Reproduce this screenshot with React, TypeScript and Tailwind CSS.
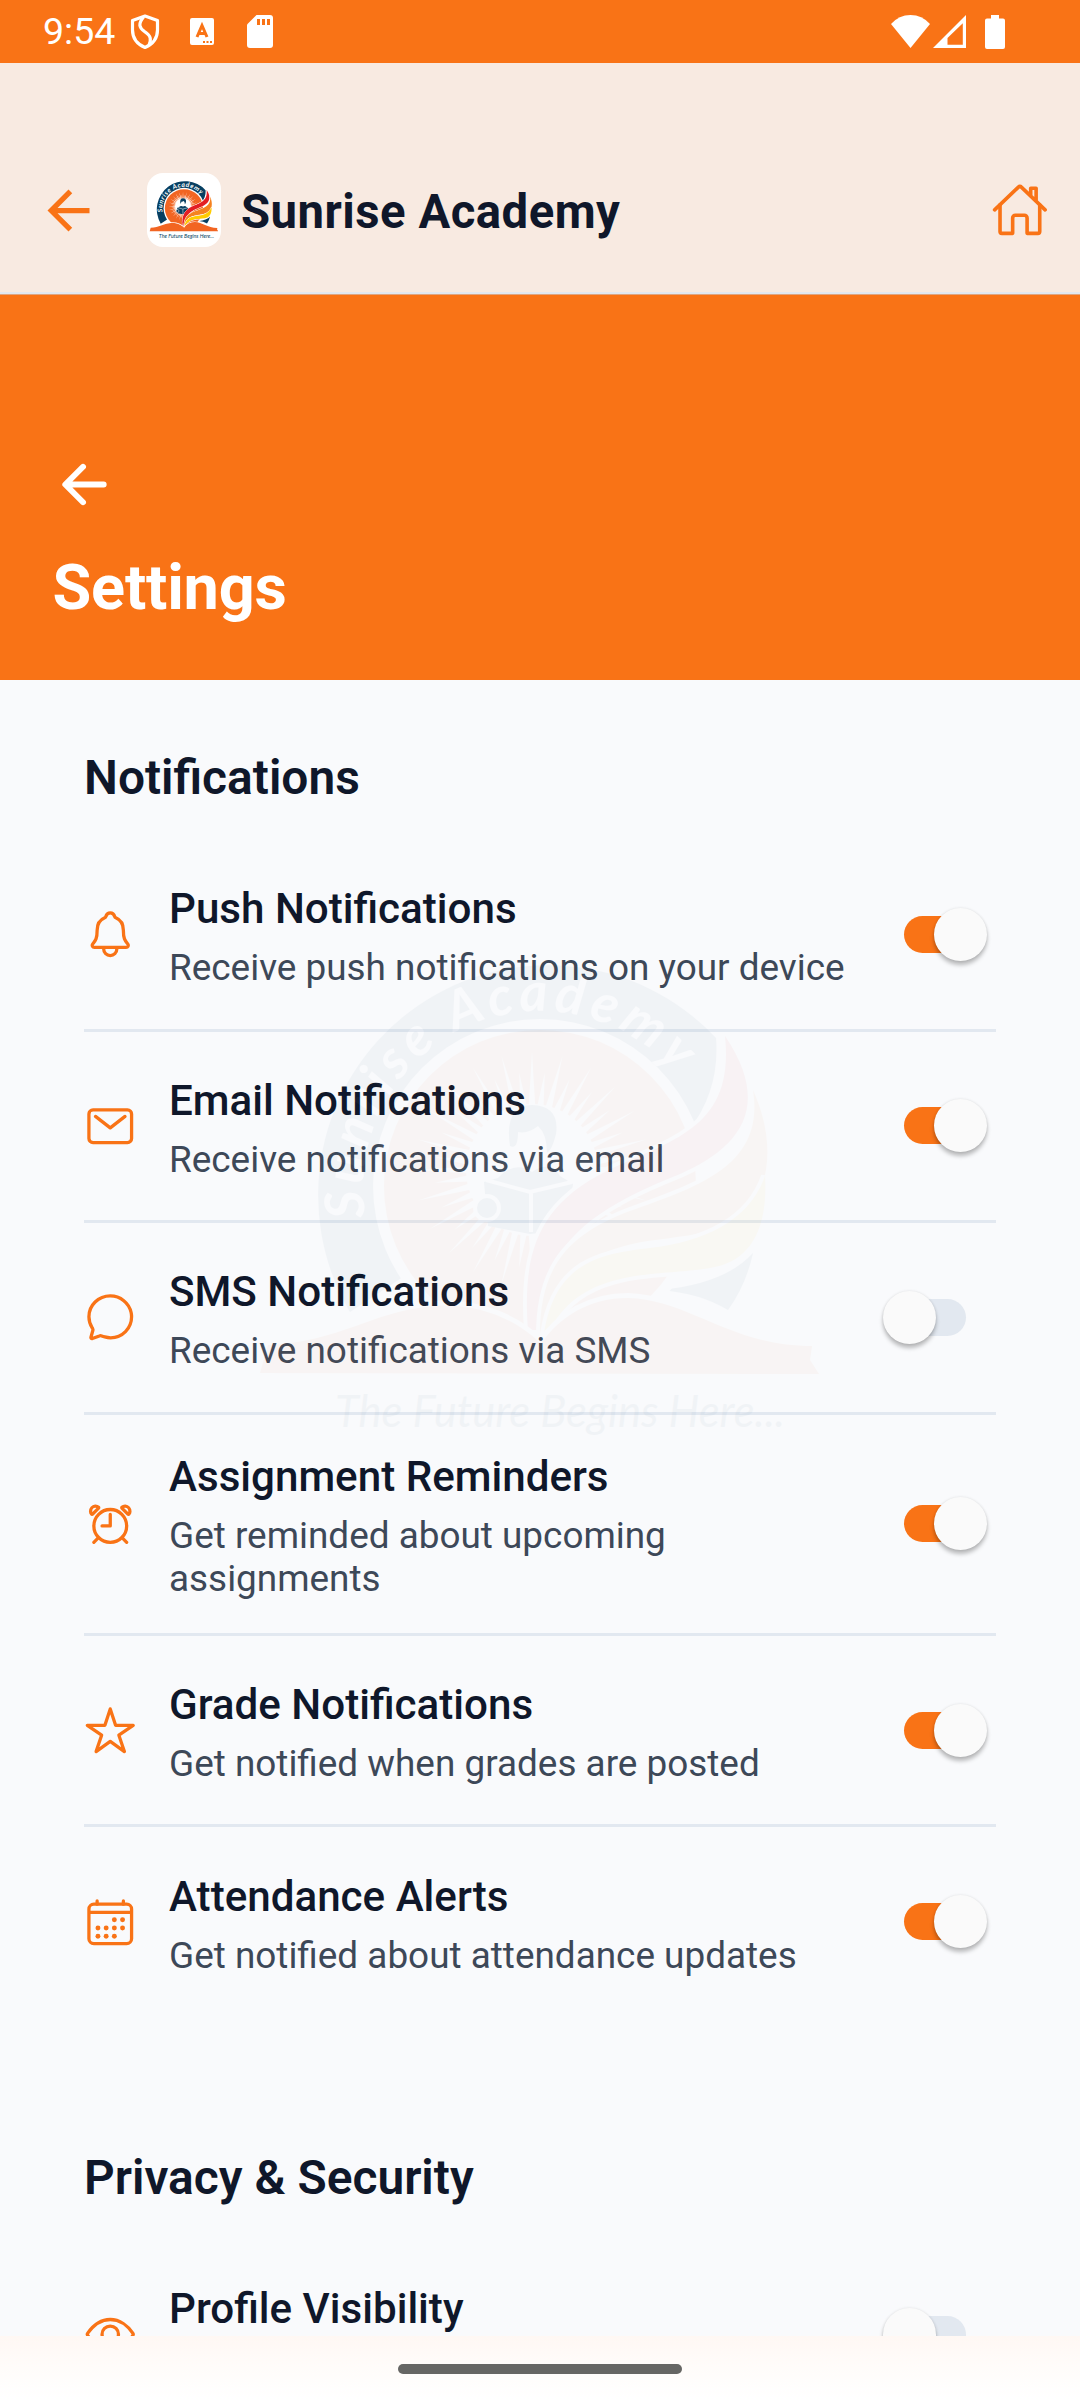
import React from "react";
import {
  IoAlarmOutline,
  IoArrowBackOutline,
  IoCalendarOutline,
  IoChatbubbleOutline,
  IoEyeOutline,
  IoHomeOutline,
  IoMailOutline,
  IoNotificationsOutline,
  IoStarOutline,
} from "react-icons/io5";
import { MdArrowBack } from "react-icons/md";
import type { IconType } from "react-icons";

const RAYS = Array.from({ length: 48 }, (_, i) => {
  const a = (i / 48) * Math.PI * 2;
  const w = 0.055;
  const outer = i % 2 ? 98 : 118;
  const p = (r: number, t: number) =>
    `${(532 + r * Math.cos(t)).toFixed(1)},${(1170 + r * Math.sin(t)).toFixed(1)}`;
  return `${p(62, a - w)} ${p(outer, a)} ${p(62, a + w)}`;
});

function AcademyLogo({ id, className }: { id: string; className: string }) {
  return (
    <svg viewBox="238 898 604 604" className={className}>
      <path id={id} d="M365.4 1217 A177 177 0 1 1 717 1186" fill="none" />
      <path d="M350 1312 A230 230 0 0 1 716 1038 Q720 1090 689 1130 L540 1186 Z" fill="#073f62" />
      <path d="M753 1253 Q746 1285 728 1310 Q700 1293 660 1290 Q725 1284 753 1253 Z" fill="#073f62" />
      <circle cx="540" cy="1186" r="167" fill="#fff" />
      <circle cx="540" cy="1186" r="156" fill="#f26522" />
      <circle cx="532" cy="1170" r="66" fill="#fff" />
      {RAYS.map((r) => (
        <polygon key={r} points={r} fill="#fff" />
      ))}
      <path
        d="M510 1146 Q504 1106 532 1105 Q560 1106 556 1134 Q552 1150 547 1153 Q547 1134 538 1126 Q528 1134 518 1132 Q518 1150 510 1146 Z"
        fill="#073f62"
      />
      <path d="M498 1178 Q515 1160 532 1172 Q550 1160 560 1176 L573 1184 L566 1230 L530 1234 L488 1226 L484 1182 Z" fill="#073f62" />
      <path d="M486 1180 L530 1192 L572 1182 M531 1192 V1232" fill="none" stroke="#fff" strokeWidth="4" />
      <circle cx="487" cy="1208" r="12" fill="#073f62" stroke="#fff" strokeWidth="4" />
      <path
        d="M725 1036 C775 1110 735 1150 680 1174 C600 1206 540 1240 537 1330 L528 1330 C522 1250 540 1205 605 1172 C670 1140 735 1130 725 1036 Z"
        fill="#e31e24"
        stroke="#fff"
        strokeWidth="8"
        paintOrder="stroke"
      />
      <path
        d="M753 1090 C780 1150 765 1200 740 1217 C700 1246 640 1230 590 1260 C560 1280 550 1310 544 1334 L540 1334 C540 1260 575 1232 630 1211 C700 1186 765 1165 753 1090 Z"
        fill="#f58220"
        stroke="#fff"
        strokeWidth="8"
        paintOrder="stroke"
      />
      <path
        d="M765 1176 C768 1230 750 1262 710 1268 C660 1277 580 1265 548 1334 L544 1334 C555 1262 600 1254 650 1248 C705 1242 750 1220 765 1176 Z"
        fill="#ffcc00"
        stroke="#fff"
        strokeWidth="8"
        paintOrder="stroke"
      />
      <path
        d="M260 1373 L268 1345 C340 1342 370 1312 433 1306 C480 1302 520 1322 541 1344 C560 1316 590 1298 628 1298 C690 1300 730 1346 812 1346 L810 1360 L819 1374 Z"
        fill="#f26522"
        stroke="#fff"
        strokeWidth="10"
        paintOrder="stroke"
      />
      <text fill="#fff" className="font-['Lato'] text-[54px] font-bold italic">
        <textPath href={`#${id}`} textLength="460" lengthAdjust="spacing">
          Sunrise Academy
        </textPath>
      </text>
      <text
        x="335"
        y="1427"
        textLength="450"
        lengthAdjust="spacingAndGlyphs"
        fill="#073f62"
        className="font-['Lato'] text-[44px] italic"
      >
        The Future Begins Here...
      </text>
    </svg>
  );
}

function StatusBar() {
  return (
    <div className="flex h-[63px] shrink-0 items-center bg-[#f97316] pl-[43px] text-white">
      <span className="w-[87px] text-[37.5px] leading-[63px]">9:54</span>
      <svg className="h-[36px] w-[30px]" viewBox="0 0 30 36" fill="none" stroke="currentColor" strokeWidth="3.2" strokeLinejoin="round">
        <path d="M15 2 L27.500 6.500 V16 C27.500 25 22 30.500 15 33.500 C8 30.500 2.500 25 2.500 16 V6.500 Z" />
        <path d="M13.500 3 C8 10 9 13.500 14.500 17.500 C21 22 21.500 25 19 31" />
      </svg>
      <svg className="ml-[30px] h-[27px] w-[24px]" viewBox="0 0 24 27">
        <rect width="24" height="27" rx="2" fill="currentColor" />
        <path d="M7 19 L12 7.500 L17 19 M8.500 15.500 H15.500" fill="none" stroke="#f97316" strokeWidth="3" />
        <path d="M13 24 h2 M16.500 24 h2 M20 24 h2" stroke="#f97316" strokeWidth="2" />
      </svg>
      <svg className="ml-[33px] h-[33px] w-[26px]" viewBox="0 0 26 33">
        <path d="M9.500 0 H23 a3 3 0 0 1 3 3 V30 a3 3 0 0 1 -3 3 H3 a3 3 0 0 1 -3 -3 V9.500 Z" fill="currentColor" />
        <path d="M11.500 4 v6 M16.500 4 v6 M21.500 4 v6" stroke="#f97316" strokeWidth="3" />
      </svg>
      <svg className="ml-auto h-[33px] w-[39px]" viewBox="0 0 39 33">
        <path d="M0 9 Q8 0 19.500 0 T39 9 L19.500 33 Z" fill="currentColor" />
      </svg>
      <svg className="ml-[3px] h-[33px] w-[33px]" viewBox="0 0 33 33">
        <path d="M33 0 V33 H0 Z M29.800 8.200 L14.500 23 V29.800 H29.800 Z" fill="currentColor" fillRule="evenodd" />
      </svg>
      <svg className="mr-[75px] ml-[19px] h-[34px] w-[20px]" viewBox="0 0 20 34">
        <path d="M6 0 H14 V3.500 H18 a2 2 0 0 1 2 2 V32 a2 2 0 0 1 -2 2 H2 a2 2 0 0 1 -2 -2 V5.500 a2 2 0 0 1 2 -2 H6 Z" fill="currentColor" />
      </svg>
    </div>
  );
}

function Switch({ on }: { on: boolean }) {
  return (
    <div
      role="switch"
      aria-checked={on}
      className={`relative mr-[30px] h-[37px] w-[62px] shrink-0 rounded-full ${on ? "bg-[#f97316]" : "bg-[#e2e8f0]"}`}
    >
      <div
        className={`absolute top-[-8px] size-[53px] rounded-full bg-[#fafafa] shadow-[0_4px_4px_rgba(0,0,0,0.26),0_0_3px_rgba(0,0,0,0.1)] ${on ? "left-[30px]" : "left-[-21px]"}`}
      />
    </div>
  );
}

type Setting = { icon: IconType; title: string; text: string; on: boolean };

function SettingRow({ icon: Icon, title, text, on, last }: Setting & { last?: boolean }) {
  return (
    <div
      className={`flex shrink-0 items-center py-[33.5px] ${last ? "min-h-[189px]" : "min-h-[191.6px] border-b-[3px] border-[#e2e8f0]"}`}
    >
      <Icon className="size-[52.5px] shrink-0 text-[#f97316]" />
      <div className="ml-[32.5px] min-w-0 flex-1 pt-1 pr-[56px]">
        <div className="text-[42.15px] leading-[50px] font-medium text-[#0f172a]">{title}</div>
        <div className="mt-[12px] -mb-px text-[36.9px] leading-[43px] text-[#3d4858]">{text}</div>
      </div>
      <Switch on={on} />
    </div>
  );
}

const NOTIFICATIONS: Setting[] = [
  { icon: IoNotificationsOutline, title: "Push Notifications", text: "Receive push notifications on your device", on: true },
  { icon: IoMailOutline, title: "Email Notifications", text: "Receive notifications via email", on: true },
  { icon: IoChatbubbleOutline, title: "SMS Notifications", text: "Receive notifications via SMS", on: false },
  { icon: IoAlarmOutline, title: "Assignment Reminders", text: "Get reminded about upcoming assignments", on: true },
  { icon: IoStarOutline, title: "Grade Notifications", text: "Get notified when grades are posted", on: true },
  { icon: IoCalendarOutline, title: "Attendance Alerts", text: "Get notified about attendance updates", on: true },
];

const PRIVACY: Setting[] = [
  { icon: IoEyeOutline, title: "Profile Visibility", text: "Make your profile visible to others", on: false },
];

function Section({ title, items }: { title: string; items: Setting[] }) {
  return (
    <section className="flex shrink-0 flex-col">
      <h2 className="mb-[34px] text-[47.9px] leading-[56px] font-semibold text-[#0f172a]">{title}</h2>
      {items.map((s, i) => (
        <SettingRow key={s.title} {...s} last={i === items.length - 1} />
      ))}
    </section>
  );
}

export default function App() {
  return (
    <div className="relative flex h-[2400px] w-[1080px] flex-col overflow-hidden bg-[#f9fafc] font-['Roboto',sans-serif]">
      <StatusBar />
      <header className="flex h-[231px] shrink-0 items-end border-b-2 border-[#e2e8f0] bg-[#f8eae1] pr-[31px] pb-[45px] pl-[37px]">
        <div className="flex flex-1 items-center">
          <MdArrowBack className="size-[63px] text-[#f97316]" />
          <div className="ml-[47px] size-[74px] overflow-hidden rounded-[16px] bg-white">
            <AcademyLogo id="brand-arc" className="size-[74px]" />
          </div>
          <span className="ml-[20px] pt-[3px] text-[47.25px] leading-[56px] font-bold tracking-[0.5px] text-[#0f172a]">Sunrise Academy</span>
          <IoHomeOutline className="ml-auto size-[57.75px] text-[#f97316]" />
        </div>
      </header>
      <div className="flex h-[386px] shrink-0 flex-col border-t border-[#dda582] bg-[#f97316] px-[52.5px] pt-[158px] text-white">
        <IoArrowBackOutline className="size-[63px] shrink-0" />
        <h1 className="mt-[35px] text-[63px] leading-[74px] font-bold tracking-[-0.2px]">Settings</h1>
      </div>
      <main className="flex min-h-0 flex-1 flex-col gap-[133.5px] overflow-hidden px-[84px] pt-[70px]">
        <Section title="Notifications" items={NOTIFICATIONS} />
        <Section title="Privacy & Security" items={PRIVACY} />
      </main>
      <div className="flex h-[64px] shrink-0 items-center justify-center bg-linear-to-b from-[#fff8f4] via-[#fffcfa] to-white pt-[2px]">
        <div className="h-[10px] w-[284px] rounded-full bg-[#666664]" />
      </div>
      <div className="pointer-events-none absolute inset-0 flex items-center justify-center opacity-[0.033]">
        <AcademyLogo id="watermark-arc" className="size-[604px]" />
      </div>
    </div>
  );
}
